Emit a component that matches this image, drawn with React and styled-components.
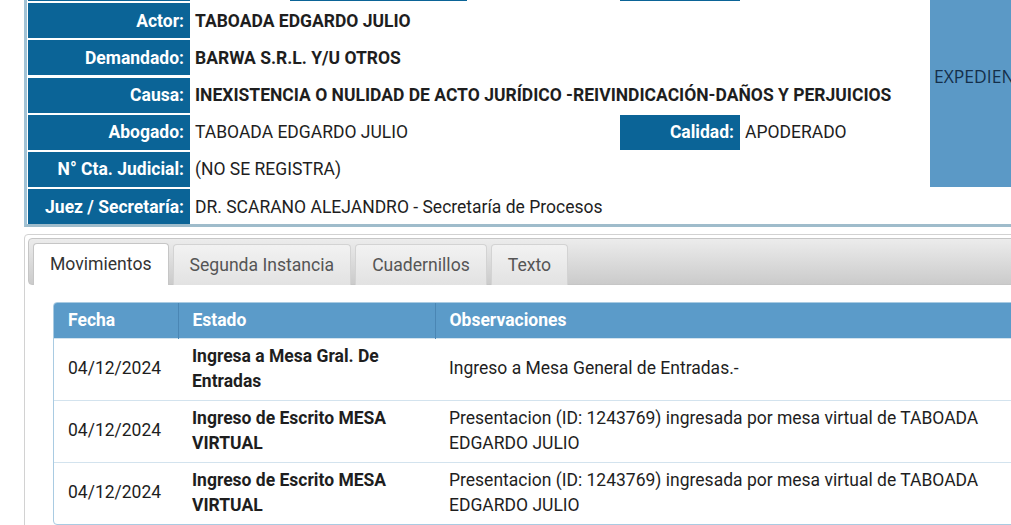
import React from "react";
import styled, { createGlobalStyle } from "styled-components";

const Global = createGlobalStyle`
  html, body { margin: 0; padding: 0; background: #fff; overflow: hidden; }
  body { font-family: Roboto, "Liberation Sans", Arial, sans-serif; color: #222; }
  * { box-sizing: border-box; }
`;

const Page = styled.div`
  width: 1120px;
`;

const InfoGrid = styled.div`
  margin: -34px 0 0 24px;
  border-left: 3px solid #a2c3d6;
  border-bottom: 3px solid #9fbccb;
  padding-left: 1px;
  display: grid;
  grid-template-columns: 162px 426px 120px 186px 200px;
  grid-auto-rows: 35px;
  column-gap: 2px;
  row-gap: 2.2px;
`;

const Label = styled.div`
  background: #0b6497;
  color: #fff;
  font-weight: 700;
  font-size: 17.5px;
  display: flex;
  align-items: center;
  justify-content: flex-end;
  padding-right: 6px;
  white-space: nowrap;
`;

const Value = styled.div`
  display: flex;
  align-items: center;
  padding-left: 3px;
  font-size: 17.5px;
  font-weight: ${(p) => (p.$bold ? 700 : 400)};
  color: #1e1e1e;
  white-space: nowrap;
  grid-column: ${(p) => p.$span || "auto"};
`;

const HiddenButton = styled.div`
  background: #0b6497;
  width: 177px;
  height: 100%;
  margin-left: 95px;
`;

const SideBox = styled.div`
  grid-column: 5;
  grid-row: 1 / 7;
  background: #5b99c6;
  display: flex;
  align-items: center;
  padding-left: 4px;
  font-family: "Open Sans", "Noto Sans", sans-serif;
  font-size: 17.5px;
  color: #142f4a;
  white-space: nowrap;
  overflow: hidden;
`;

const TabsPanel = styled.div`
  margin: 7px 0 0 24px;
  border: 1px solid #d2d2d2;
  border-radius: 4px;
  padding: 3px;
`;

const TabBar = styled.div`
  display: flex;
  align-items: flex-end;
  border: 1px solid #c6c6c6;
  border-radius: 4px;
  background: linear-gradient(#ececec, #cbcbcb);
  padding: 5px 0 0 4px;
  height: 47px;
`;

const Tab = styled.div`
  height: ${(p) => (p.$active ? "42px" : "41px")};
  margin-bottom: -1px;
  margin-right: 4px;
  padding: 0 16px;
  display: flex;
  align-items: center;
  padding-bottom: ${(p) => (p.$active ? "1px" : "0")};
  border: 1px solid ${(p) => (p.$active ? "#c6c6c6" : "#d3d3d3")};
  border-bottom: none;
  border-radius: 4px 4px 0 0;
  background: ${(p) => (p.$active ? "#fff" : "linear-gradient(#f2f2f2, #e2e2e2)")};
  color: ${(p) => (p.$active ? "#333" : "#555")};
  font-size: 17.6px;
  white-space: nowrap;
`;

const TabContent = styled.div`
  padding: 17px 0 0 25px;
`;

const TableBox = styled.div`
  width: 981px;
  border: 1px solid #a9cbe2;
  border-radius: 4px;
  overflow: hidden;
`;

const Table = styled.table`
  width: 100%;
  border-collapse: collapse;
  table-layout: fixed;
  font-size: 17.5px;
`;

const Th = styled.th`
  background: #5b9bc9;
  color: #fff;
  font-weight: 700;
  text-align: left;
  height: 35px;
  padding: 0 14px;
  border-right: 1px solid #4a86b4;
  &:last-child { border-right: none; }
`;

const Td = styled.td`
  padding: 5px 14px;
  line-height: 25.5px;
  vertical-align: middle;
  color: #1e1e1e;
  font-weight: ${(p) => (p.$bold ? 700 : 400)};
  border-top: 1px solid #d3e3ee;
`;

const infoRows = [
  { label: "Actor:", value: "TABOADA EDGARDO JULIO", bold: true },
  { label: "Demandado:", value: "BARWA S.R.L. Y/U OTROS", bold: true },
  {
    label: "Causa:",
    value: "INEXISTENCIA O NULIDAD DE ACTO JURÍDICO -REIVINDICACIÓN-DAÑOS Y PERJUICIOS",
    bold: true,
  },
];

const movimientos = [
  {
    fecha: "04/12/2024",
    estado: "Ingresa a Mesa Gral. De Entradas",
    obs: "Ingreso a Mesa General de Entradas.-",
  },
  {
    fecha: "04/12/2024",
    estado: "Ingreso de Escrito MESA VIRTUAL",
    obs: "Presentacion (ID: 1243769) ingresada por mesa virtual de TABOADA EDGARDO JULIO",
  },
  {
    fecha: "04/12/2024",
    estado: "Ingreso de Escrito MESA VIRTUAL",
    obs: "Presentacion (ID: 1243769) ingresada por mesa virtual de TABOADA EDGARDO JULIO",
  },
];

export default function App() {
  return (
    <Page>
      <Global />
      <InfoGrid>
        <Label />
        <Value>
          <HiddenButton />
        </Value>
        <Label />
        <Value />
        <SideBox>EXPEDIENTE DIGITAL</SideBox>

        {infoRows.map((r) => (
          <React.Fragment key={r.label}>
            <Label>{r.label}</Label>
            <Value $bold={r.bold} $span="2 / 5">
              {r.value}
            </Value>
          </React.Fragment>
        ))}

        <Label>Abogado:</Label>
        <Value>TABOADA EDGARDO JULIO</Value>
        <Label>Calidad:</Label>
        <Value>APODERADO</Value>

        <Label>N° Cta. Judicial:</Label>
        <Value $span="2 / 5">(NO SE REGISTRA)</Value>

        <Label>Juez / Secretaría:</Label>
        <Value $span="2 / 6">DR. SCARANO ALEJANDRO - Secretaría de Procesos</Value>
      </InfoGrid>

      <TabsPanel>
        <TabBar>
          <Tab $active>Movimientos</Tab>
          <Tab>Segunda Instancia</Tab>
          <Tab>Cuadernillos</Tab>
          <Tab>Texto</Tab>
        </TabBar>
        <TabContent>
          <TableBox>
            <Table>
              <colgroup>
                <col style={{ width: "124px" }} />
                <col style={{ width: "257px" }} />
                <col />
              </colgroup>
              <thead>
                <tr>
                  <Th>Fecha</Th>
                  <Th>Estado</Th>
                  <Th>Observaciones</Th>
                </tr>
              </thead>
              <tbody>
                {movimientos.map((m, i) => (
                  <tr key={i}>
                    <Td>{m.fecha}</Td>
                    <Td $bold>{m.estado}</Td>
                    <Td>{m.obs}</Td>
                  </tr>
                ))}
              </tbody>
            </Table>
          </TableBox>
        </TabContent>
      </TabsPanel>
    </Page>
  );
}
